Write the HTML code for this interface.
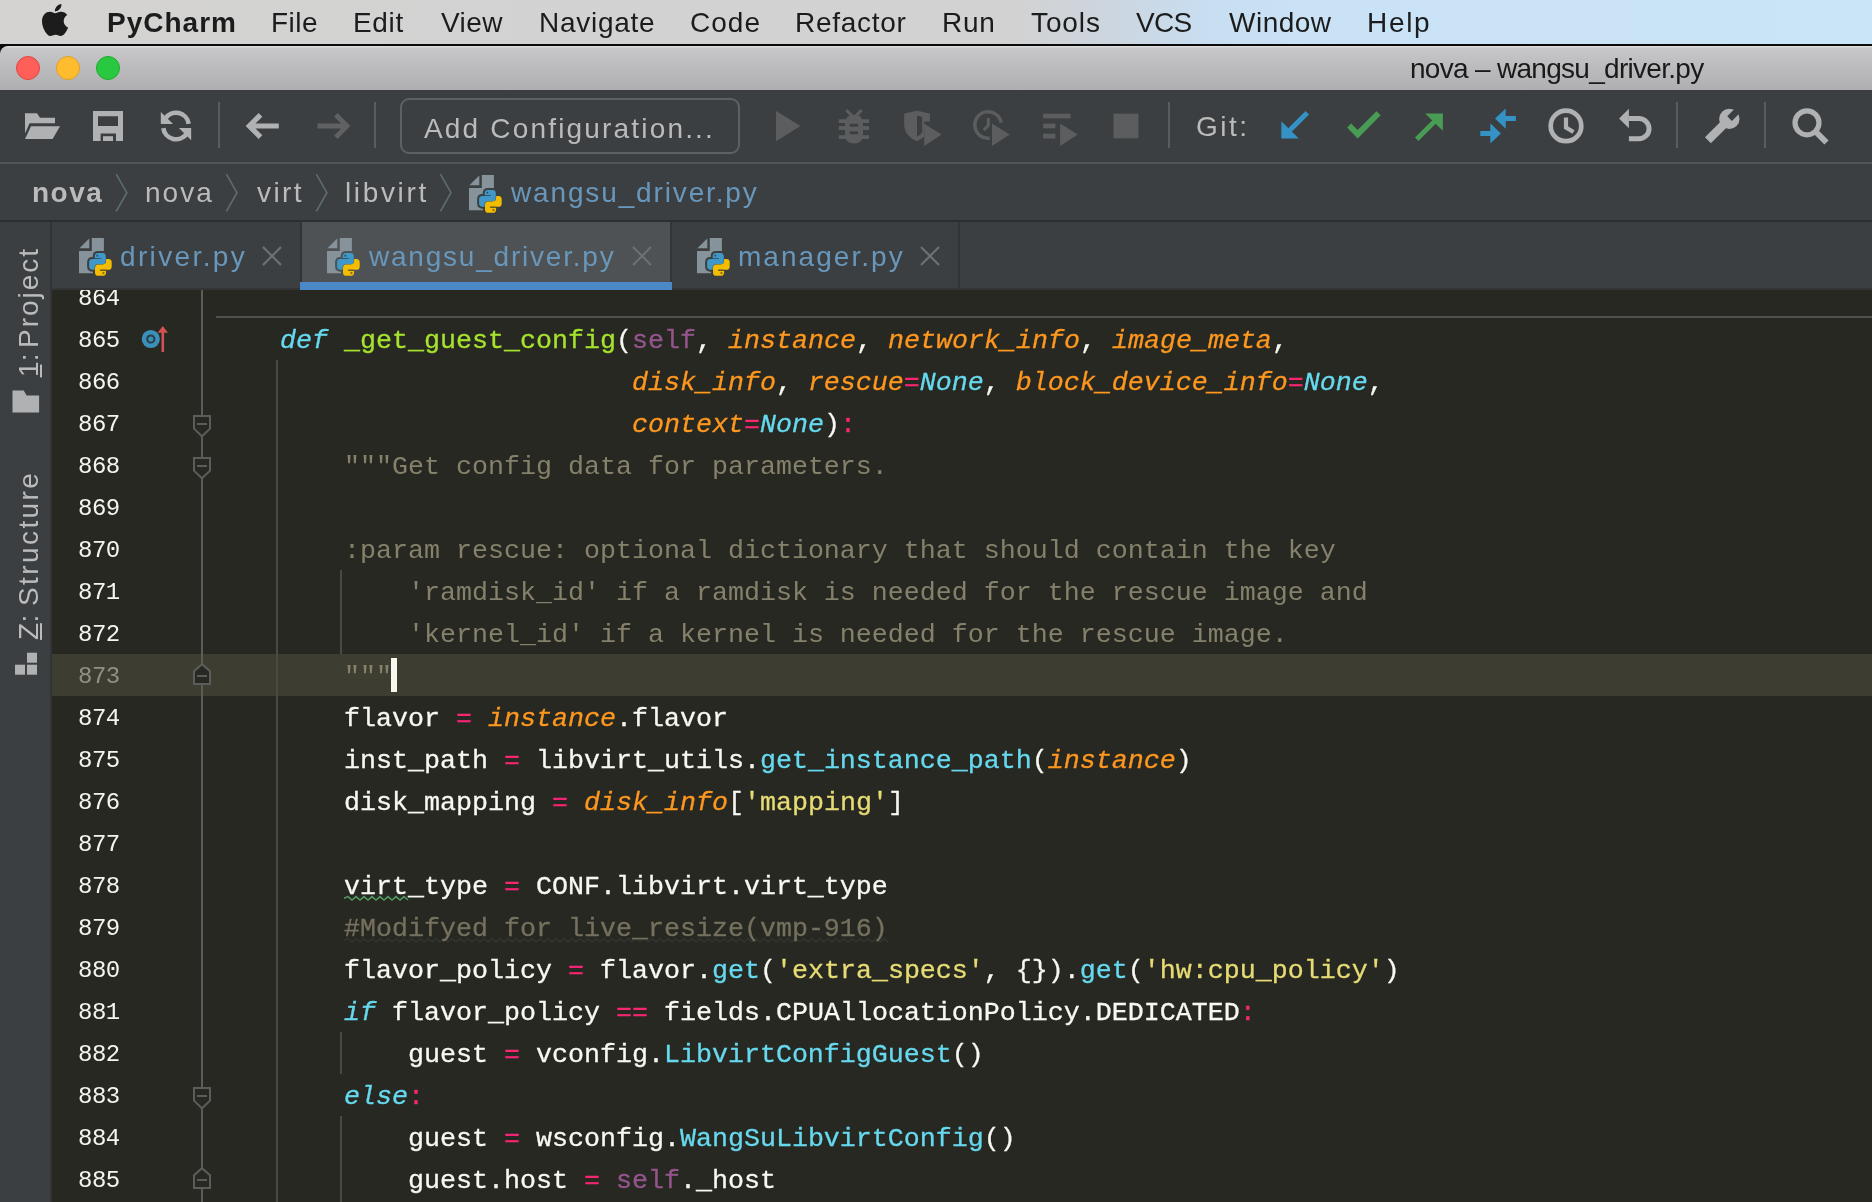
<!DOCTYPE html><html><head><meta charset="utf-8"><title>PyCharm</title><style>
*{margin:0;padding:0;box-sizing:border-box}
html,body{width:1872px;height:1202px;overflow:hidden;background:#272822}
body{position:relative;font-family:"Liberation Sans", sans-serif}
.ic{position:absolute;display:block;overflow:visible}
.abs{position:absolute}
.lb{will-change:transform;position:absolute;white-space:pre;line-height:40px;height:40px;font-family:"Liberation Sans", sans-serif}
#menubar{position:absolute;left:0;top:0;width:1872px;height:44px;background:linear-gradient(to right,#d4d3d2 0,#d2d2d2 1010px,#cdd5dd 1100px,#c8ddf0 1200px,#cae2f6 1300px,#cbe3f6 1500px,#c9e5f7 1872px)}
#menushade{display:none}
#menuline{position:absolute;left:0;top:44px;width:1872px;height:2px;background:#0a0a0a}
#titlebar{position:absolute;left:0;top:46px;width:1872px;height:44px;background:linear-gradient(to bottom,#dcdcdd 0,#dcdcdd 1px,#c7c7c9 2px,#bbbbbd 50%,#afafb1 100%);border-top-left-radius:8px}
#titleback{position:absolute;left:0;top:44px;width:20px;height:20px;background:#0a0a0a}
.tl{position:absolute;top:56px;width:24px;height:24px;border-radius:50%}
#toolbar{position:absolute;left:0;top:90px;width:1872px;height:72px;background:#3c3f41}
#tbline{position:absolute;left:0;top:162px;width:1872px;height:2px;background:#515355}
#navbar{position:absolute;left:0;top:164px;width:1872px;height:56px;background:#3c3f41}
#navline{position:absolute;left:0;top:220px;width:1872px;height:2px;background:#2c2e2f}
#tabs{position:absolute;left:0;top:222px;width:1872px;height:66px;background:#3c3f41}
#tabsline{position:absolute;left:52px;top:288px;width:1820px;height:2px;background:#323435}
#side{position:absolute;left:0;top:222px;width:50px;height:980px;background:#3c3f41}
#sideline{position:absolute;left:50px;top:222px;width:2px;height:980px;background:#323435}
#acttab{position:absolute;left:300px;top:222px;width:372px;height:60px;background:#4e5254;border-left:2px solid #323435;border-right:2px solid #323435}
#actline{position:absolute;left:300px;top:282px;width:372px;height:8px;background:#4a88c7}
#tab3r{position:absolute;left:958px;top:222px;width:2px;height:66px;background:#323435}
#editor{position:absolute;left:52px;top:290px;width:1820px;height:912px;background:#272822}
#curline{position:absolute;left:52px;top:654px;width:1820px;height:42px;background:#3e3d32}
.ln{will-change:transform;position:absolute;left:78.2px;width:60px;height:42px;line-height:42px;font-family:"Liberation Mono", monospace;font-size:24px;letter-spacing:-0.5px;color:#f5f5f0;white-space:pre;padding-top:2px}
.ln.cur{color:#90908a}
.cl{will-change:transform;position:absolute;left:216.2px;height:42px;line-height:42px;font-family:"Liberation Mono", monospace;font-size:26.67px;color:#f8f8f2;white-space:pre;padding-top:1.5px;-webkit-text-stroke:0.3px}
.k{color:#66d9ef;font-style:italic} .f{color:#a6e22e} .p{color:#fd971f;font-style:italic} .s{color:#94558d} .o{color:#f92672}
.d{color:#86816b;-webkit-text-stroke:0} .c{color:#75715e} .y{color:#e6db74} .b{color:#66d9ef}
.vl{will-change:transform;position:absolute;white-space:pre;font-family:"Liberation Sans", sans-serif;color:#bbbbbb;line-height:1;height:0;transform-origin:0 0;transform:rotate(-90deg)}
.vl>*{} 
.vl{}
.u{text-decoration:underline;text-decoration-thickness:2px;text-underline-offset:3px}
</style></head><body>
<div id="editor"></div><div id="curline"></div>
<svg class="ic" style="left:0;top:290px" width="1872" height="912" viewBox="0 290 1872 912">
<rect x="216" y="316" width="1656" height="2" fill="#505050"/>
<rect x="201" y="290" width="2" height="912" fill="#5c5c5a"/>
<rect x="276" y="360" width="2" height="842" fill="#494a45"/>
<rect x="340" y="570" width="2" height="84" fill="#494a45"/>
<rect x="340" y="1032" width="2" height="42" fill="#494a45"/>
<rect x="340" y="1116" width="2" height="86" fill="#494a45"/>
<path d="M194,416 H210 V428.6 L202,436.3 L194,428.6 Z" fill="#272822" stroke="#5c5c5a" stroke-width="2"/><path d="M197,424 H207" stroke="#5c5c5a" stroke-width="2"/>
<path d="M194,458 H210 V470.6 L202,478.3 L194,470.6 Z" fill="#272822" stroke="#5c5c5a" stroke-width="2"/><path d="M197,466 H207" stroke="#5c5c5a" stroke-width="2"/>
<path d="M194,1088 H210 V1100.6 L202,1108.3 L194,1100.6 Z" fill="#272822" stroke="#5c5c5a" stroke-width="2"/><path d="M197,1096 H207" stroke="#5c5c5a" stroke-width="2"/>
<path d="M194,684 H210 V671.2 L202,664.2 L194,671.2 Z" fill="#272822" stroke="#5c5c5a" stroke-width="2"/><path d="M197,676 H207" stroke="#5c5c5a" stroke-width="2"/>
<path d="M194,1188 H210 V1175.2 L202,1168.2 L194,1175.2 Z" fill="#272822" stroke="#5c5c5a" stroke-width="2"/><path d="M197,1180 H207" stroke="#5c5c5a" stroke-width="2"/>
<circle cx="150.8" cy="339" r="9.1" fill="#3a90b8"/><circle cx="150.8" cy="339" r="3.6" fill="none" stroke="#2b3b45" stroke-width="2"/>
<path d="M162.8,352 V331" stroke="#d25252" stroke-width="2.6" fill="none"/><path d="M157.6,332.8 L162.8,326 L168,332.8 Z" fill="#d25252"/>
<rect x="391" y="658" width="6" height="34" fill="#f8f8f0"/>
<path d="M344,898.3000000000001 L348,896.6 L352,900.0 L356,896.6 L360,900.0 L364,896.6 L368,900.0 L372,896.6 L376,900.0 L380,896.6 L384,900.0 L388,896.6 L392,900.0 L396,896.6 L400,900.0 L404,896.6 L408,900.0" fill="none" stroke="#4f9a5e" stroke-width="1.5"/>
<path d="M344,940.3000000000001 L348,938.6 L352,942.0 L356,938.6 L360,942.0 L364,938.6 L368,942.0 L372,938.6 L376,942.0 L380,938.6 L384,942.0 L388,938.6 L392,942.0 L396,938.6 L400,942.0 L404,938.6 L408,942.0 L412,938.6 L416,942.0 L420,938.6 L424,942.0 L428,938.6 L432,942.0 L436,938.6 L440,942.0 L444,938.6 L448,942.0 L452,938.6 L456,942.0 L460,938.6 L464,942.0 L468,938.6 L472,942.0 L476,938.6 L480,942.0 L484,938.6 L488,942.0 L492,938.6 L496,942.0 L500,938.6 L504,942.0 L508,938.6 L512,942.0 L516,938.6 L520,942.0 L524,938.6 L528,942.0 L532,938.6 L536,942.0 L540,938.6 L544,942.0 L548,938.6 L552,942.0 L556,938.6 L560,942.0 L564,938.6 L568,942.0 L572,938.6 L576,942.0 L580,938.6 L584,942.0 L588,938.6 L592,942.0 L596,938.6 L600,942.0 L604,938.6 L608,942.0 L612,938.6 L616,942.0 L620,938.6 L624,942.0 L628,938.6 L632,942.0 L636,938.6 L640,942.0 L644,938.6 L648,942.0 L652,938.6 L656,942.0 L660,938.6 L664,942.0 L668,938.6 L672,942.0 L676,938.6 L680,942.0 L684,938.6 L688,942.0 L692,938.6 L696,942.0 L700,938.6 L704,942.0 L708,938.6 L712,942.0 L716,938.6 L720,942.0 L724,938.6 L728,942.0 L732,938.6 L736,942.0 L740,938.6 L744,942.0 L748,938.6 L752,942.0 L756,938.6 L760,942.0 L764,938.6 L768,942.0 L772,938.6 L776,942.0 L780,938.6 L784,942.0 L788,938.6 L792,942.0 L796,938.6 L800,942.0 L804,938.6 L808,942.0 L812,938.6 L816,942.0 L820,938.6 L824,942.0 L828,938.6 L832,942.0 L836,938.6 L840,942.0 L844,938.6 L848,942.0 L852,938.6 L856,942.0 L860,938.6 L864,942.0 L868,938.6 L872,942.0 L876,938.6 L880,942.0 L884,938.6 L888,942.0" fill="none" stroke="#363732" stroke-width="1.3"/>
</svg>
<div class="ln" style="top:276px">864</div>
<div class="ln" style="top:318px">865</div>
<div class="cl" style="top:318px">    <span class="k">def</span> <span class="f">_get_guest_config</span>(<span class="s">self</span>, <span class="p">instance</span>, <span class="p">network_info</span>, <span class="p">image_meta</span>,</div>
<div class="ln" style="top:360px">866</div>
<div class="cl" style="top:360px">                          <span class="p">disk_info</span>, <span class="p">rescue</span><span class="o">=</span><span class="k">None</span>, <span class="p">block_device_info</span><span class="o">=</span><span class="k">None</span>,</div>
<div class="ln" style="top:402px">867</div>
<div class="cl" style="top:402px">                          <span class="p">context</span><span class="o">=</span><span class="k">None</span>)<span class="o">:</span></div>
<div class="ln" style="top:444px">868</div>
<div class="cl" style="top:444px">        <span class="d">&quot;&quot;&quot;Get config data for parameters.</span></div>
<div class="ln" style="top:486px">869</div>
<div class="ln" style="top:528px">870</div>
<div class="cl" style="top:528px">        <span class="d">:param rescue: optional dictionary that should contain the key</span></div>
<div class="ln" style="top:570px">871</div>
<div class="cl" style="top:570px">            <span class="d">&#x27;ramdisk_id&#x27; if a ramdisk is needed for the rescue image and</span></div>
<div class="ln" style="top:612px">872</div>
<div class="cl" style="top:612px">            <span class="d">&#x27;kernel_id&#x27; if a kernel is needed for the rescue image.</span></div>
<div class="ln cur" style="top:654px">873</div>
<div class="cl" style="top:654px">        <span class="d">&quot;&quot;&quot;</span></div>
<div class="ln" style="top:696px">874</div>
<div class="cl" style="top:696px">        flavor <span class="o">=</span> <span class="p">instance</span>.flavor</div>
<div class="ln" style="top:738px">875</div>
<div class="cl" style="top:738px">        inst_path <span class="o">=</span> libvirt_utils.<span class="b">get_instance_path</span>(<span class="p">instance</span>)</div>
<div class="ln" style="top:780px">876</div>
<div class="cl" style="top:780px">        disk_mapping <span class="o">=</span> <span class="p">disk_info</span>[<span class="y">&#x27;mapping&#x27;</span>]</div>
<div class="ln" style="top:822px">877</div>
<div class="ln" style="top:864px">878</div>
<div class="cl" style="top:864px">        virt_type <span class="o">=</span> CONF.libvirt.virt_type</div>
<div class="ln" style="top:906px">879</div>
<div class="cl" style="top:906px">        <span class="c">#Modifyed for live_resize(vmp-916)</span></div>
<div class="ln" style="top:948px">880</div>
<div class="cl" style="top:948px">        flavor_policy <span class="o">=</span> flavor.<span class="b">get</span>(<span class="y">&#x27;extra_specs&#x27;</span>, {}).<span class="b">get</span>(<span class="y">&#x27;hw:cpu_policy&#x27;</span>)</div>
<div class="ln" style="top:990px">881</div>
<div class="cl" style="top:990px">        <span class="k">if</span> flavor_policy <span class="o">==</span> fields.CPUAllocationPolicy.DEDICATED<span class="o">:</span></div>
<div class="ln" style="top:1032px">882</div>
<div class="cl" style="top:1032px">            guest <span class="o">=</span> vconfig.<span class="b">LibvirtConfigGuest</span>()</div>
<div class="ln" style="top:1074px">883</div>
<div class="cl" style="top:1074px">        <span class="k">else</span><span class="o">:</span></div>
<div class="ln" style="top:1116px">884</div>
<div class="cl" style="top:1116px">            guest <span class="o">=</span> wsconfig.<span class="b">WangSuLibvirtConfig</span>()</div>
<div class="ln" style="top:1158px">885</div>
<div class="cl" style="top:1158px">            guest.host <span class="o">=</span> <span class="s">self</span>._host</div>
<div id="menubar"></div><div id="menushade"></div><div id="menuline"></div><div id="titleback"></div><div id="titlebar"></div>
<div class="tl" style="left:16px;background:#fe5f58;border:1px solid #e2463f"></div>
<div class="tl" style="left:56px;background:#febc2e;border:1px solid #e0a028"></div>
<div class="tl" style="left:96px;background:#28c840;border:1px solid #1eab2d"></div>
<svg class="ic" style="left:42px;top:3.8px" width="26" height="32" viewBox="0 0 814 1000"><path fill="#1c1c1c" d="M788.1 340.9c-5.800 4.500-108.200 62.200-108.200 190.500 0 148.400 130.300 200.900 134.200 202.200-.6 3.200-20.700 71.900-68.700 141.900-42.800 61.600-87.500 123.100-155.500 123.100s-85.500-39.500-164-39.500c-76.500 0-103.700 40.800-165.900 40.800s-105.600-57-155.500-127C46.700 790.700 0 663 0 541.800c0-194.400 126.400-297.500 250.800-297.500 66.100 0 121.200 43.400 162.700 43.400 39.500 0 101.100-46 176.300-46 28.500 0 130.900 2.600 198.300 99.200zm-234-181.500c31.100-36.900 53.100-88.100 53.100-139.300 0-7.100-.6-14.300-1.900-20.100-50.600 1.900-110.800 33.700-147.100 75.800-28.500 32.400-55.100 83.600-55.100 135.500 0 7.800 1.300 15.600 1.900 18.100 3.200.6 8.400 1.300 13.600 1.300 45.400 0 102.500-30.400 135.500-71.300z"/></svg>
<div id="toolbar"></div><div id="tbline"></div><div id="navbar"></div><div id="navline"></div><div id="tabs"></div><div id="tabsline"></div>
<div id="side"></div><div id="sideline"></div><div id="acttab"></div><div id="actline"></div><div id="tab3r"></div>
<svg class="ic" style="left:0;top:90px" width="1872" height="74" viewBox="0 90 1872 74">
<path d="M25,113.3 H37 L40,117.7 H55 V123.3 H29.6 L25,133.6 Z" fill="#afb1b3"/>
<path d="M31,126.2 H60 L52.6,139 H25 Z" fill="#afb1b3"/>
<path fill-rule="evenodd" d="M93,111 H123 V141 H116 V133.6 H100.6 V141 H93 Z M98,116.3 H118 V126 H98 Z" fill="#afb1b3"/>
<rect x="103" y="136.2" width="10" height="4.8" fill="#afb1b3"/>
<path d="M188.7,123.9 A12.85,12.85 0 0 0 165.3,118.4" fill="none" stroke="#afb1b3" stroke-width="4.6"/>
<path d="M163.3,128.1 A12.85,12.85 0 0 0 186.7,133.6" fill="none" stroke="#afb1b3" stroke-width="4.6"/>
<path d="M160.8,111.9 V123.9 H173.1 Z" fill="#afb1b3"/>
<path d="M191.2,140.2 V128.1 H178.9 Z" fill="#afb1b3"/>
<rect x="218" y="102" width="2" height="46" fill="#5a5c5d"/>
<rect x="374" y="102" width="2" height="46" fill="#5a5c5d"/>
<rect x="1168" y="102" width="2" height="46" fill="#5a5c5d"/>
<rect x="1676" y="102" width="2" height="46" fill="#5a5c5d"/>
<rect x="1764" y="102" width="2" height="46" fill="#5a5c5d"/>
<path d="M278.8,126 H250 M260.5,114.8 L249.3,126 L260.5,137.2" fill="none" stroke="#afb1b3" stroke-width="5.2" stroke-linejoin="miter"/>
<path d="M317.5,126 H346.3 M335.8,114.8 L347,126 L335.8,137.2" fill="none" stroke="#5f6163" stroke-width="4.8" stroke-linejoin="miter"/>
<rect x="401" y="99" width="338" height="54" rx="8" ry="8" fill="none" stroke="#5e6163" stroke-width="2"/>
<path d="M776,111 V141.2 L800.6,126 Z" fill="#5b5d5e"/>
<path d="M845,124 Q845,114.8 854,114.8 Q863,114.8 863,124 V134.5 Q863,143.6 854,143.6 Q845,143.6 845,134.5 Z" fill="#5b5d5e"/>
<path d="M838.8,121.2 H869 M838.8,128 H869 M838.8,137.2 H869" stroke="#5b5d5e" stroke-width="3.8"/>
<path d="M846.3,110 L851.8,115.6 M861.7,110 L856.2,115.6" stroke="#5b5d5e" stroke-width="3.2"/>
<rect x="849.7" y="123.8" width="8.4" height="2.9" fill="#3c3f41"/><rect x="849.7" y="131.3" width="8.4" height="2.9" fill="#3c3f41"/>
<path fill-rule="evenodd" d="M904.2,113.5 L917,110.8 L929.9,113.5 V121.5 H924.2 V136.6 Q921,139.5 917,141.2 Q904.2,136 904.2,124 Z M917,115.5 V136.5 Q920.5,134.8 922.2,132.2 V117 Z" fill="#5b5d5e"/>
<path d="M924.2,123.8 V146 L941.6,134.5 Z" fill="#5b5d5e"/>
<path d="M1001.2,122.6 A13.3,13.3 0 1 0 989.7,138.2" fill="none" stroke="#5b5d5e" stroke-width="3.5"/>
<path d="M988.3,118 V125.5 L983.7,130.2" fill="none" stroke="#5b5d5e" stroke-width="3"/>
<path d="M992,123.6 V146 L1009.7,134.5 Z" fill="#5b5d5e"/>
<rect x="1043.1" y="113.7" width="27.5" height="4.7" fill="#5b5d5e"/><rect x="1043.1" y="123.6" width="12.3" height="4.7" fill="#5b5d5e"/><rect x="1043.1" y="133.7" width="12.3" height="4.8" fill="#5b5d5e"/>
<path d="M1060.1,123.6 V146 L1077.8,134.5 Z" fill="#5b5d5e"/>
<rect x="1113.5" y="113.7" width="24.9" height="24.6" fill="#5b5d5e"/>
<path d="M1281.3,138.6 V121.2 L1298.8,138.6 Z" fill="#3592c4"/><path d="M1288,132 L1307.3,112.8" stroke="#3592c4" stroke-width="5" fill="none"/>
<path d="M1347.1,127.6 L1351.2,123.6 L1357.6,130 L1376.5,111.2 L1380.7,115.3 L1357.6,138.6 Z" fill="#499c54"/>
<path d="M1425.1,113.4 H1442.9 V130.8 Z" fill="#499c54"/><path d="M1416.7,139.3 L1436,120" stroke="#499c54" stroke-width="4.8" fill="none"/>
<path d="M1495.1,118.5 L1505.7,108.4 V116 H1515.9 V121 H1505.7 V128.7 Z" fill="#3592c4"/>
<path d="M1500.9,133.5 L1490.3,123.3 V131.1 H1480.3 V136 H1490.3 V143.6 Z" fill="#3592c4"/>
<circle cx="1566" cy="125.9" r="15.3" fill="none" stroke="#afb1b3" stroke-width="4.7"/>
<path d="M1566,117.6 V127.5 L1573.5,132" fill="none" stroke="#afb1b3" stroke-width="4.2"/>
<path d="M1619.1,118.5 L1628.9,108.7 V128.2 Z" fill="#afb1b3"/>
<path d="M1628.9,118.5 H1638.9 A10.15,10.15 0 0 1 1638.9,138.8 H1628.9" fill="none" stroke="#afb1b3" stroke-width="5"/>
<path d="M1707.9,140.3 L1727,121.2" stroke="#afb1b3" stroke-width="8.4" fill="none"/>
<circle cx="1729.3" cy="118.9" r="10.2" fill="#afb1b3"/>
<path d="M1729.6,118.6 L1742,106.2" stroke="#3c3f41" stroke-width="6.6" fill="none"/>
<circle cx="1807" cy="122.8" r="12" fill="none" stroke="#afb1b3" stroke-width="5.2"/>
<path d="M1815.5,131.5 L1826.5,142.5" stroke="#afb1b3" stroke-width="6" fill="none"/>
</svg>
<svg class="ic" style="left:0;top:164px" width="800" height="58" viewBox="0 164 800 58">
<path d="M116.2,174.2 L126.8,192.7 L116.2,211.4" fill="none" stroke="#5c6b72" stroke-width="1.7"/>
<path d="M226.4,174.2 L237.0,192.7 L226.4,211.4" fill="none" stroke="#5c6b72" stroke-width="1.7"/>
<path d="M316.3,174.2 L326.90000000000003,192.7 L316.3,211.4" fill="none" stroke="#5c6b72" stroke-width="1.7"/>
<path d="M440.4,174.2 L451.0,192.7 L440.4,211.4" fill="none" stroke="#5c6b72" stroke-width="1.7"/>
</svg>
<svg class="ic" style="left:0;top:222px" width="52" height="980" viewBox="0 222 52 980">
<path d="M12.5,390.6 H23.7 L26.6,395.6 H39.1 V412.5 H12.5 Z" fill="#afb1b3"/>
<rect x="27" y="652.7" width="10" height="10" fill="#afb1b3"/><rect x="15" y="664.7" width="10" height="10" fill="#afb1b3"/><rect x="27" y="664.7" width="10" height="10" fill="#afb1b3"/>
<rect x="40" y="364.6" width="2" height="12.8" fill="#bbbbbb"/><rect x="40" y="623.2" width="2" height="16.7" fill="#bbbbbb"/>
</svg>
<svg class="ic" style="left:466.9px;top:172.5px" width="40" height="44" viewBox="-2 -2 40 44"><path d="M12.8,0 H24.9 V35.3 H0 V13.1 H12.8 Z" fill="#87939a"/><path d="M0.4,10.3 H10.3 V0.5 Z" fill="#87939a"/><g transform="translate(10.1,14.9)"><path d="M5.6,3.4 Q5.6,0 9,0 H13.3 Q16.7,0 16.7,3.4 V8 Q16.7,11.4 13.3,11.4 H8.9 Q5.6,11.4 5.6,14.7 V16.8 H3.4 Q0,16.8 0,13.4 V9.4 Q0,6 3.4,6 H11.4 V5.2 H5.6 Z" fill="#3c3f41" stroke="#3c3f41" stroke-width="4" stroke-linejoin="round"/><path d="M17,19.5 Q17,22.9 13.6,22.9 H9.3 Q5.9,22.9 5.9,19.5 V14.9 Q5.9,11.5 9.3,11.5 H13.7 Q17,11.5 17,8.2 V6.1 H19.2 Q22.6,6.1 22.6,9.5 V13.5 Q22.6,16.9 19.2,16.9 H11.2 V17.7 H17 Z" fill="#3c3f41" stroke="#3c3f41" stroke-width="4" stroke-linejoin="round"/><path d="M5.6,3.4 Q5.6,0 9,0 H13.3 Q16.7,0 16.7,3.4 V8 Q16.7,11.4 13.3,11.4 H8.9 Q5.6,11.4 5.6,14.7 V16.8 H3.4 Q0,16.8 0,13.4 V9.4 Q0,6 3.4,6 H11.4 V5.2 H5.6 Z" fill="#3f98c8"/><path d="M17,19.5 Q17,22.9 13.6,22.9 H9.3 Q5.9,22.9 5.9,19.5 V14.9 Q5.9,11.5 9.3,11.5 H13.7 Q17,11.5 17,8.2 V6.1 H19.2 Q22.6,6.1 22.6,9.5 V13.5 Q22.6,16.9 19.2,16.9 H11.2 V17.7 H17 Z" fill="#f2bd00"/><rect x="7.4" y="1.9" width="1.7" height="1.7" fill="#2d4a5a"/><rect x="13.5" y="19.3" width="1.7" height="1.7" fill="#6b5a1a"/><rect x="5.6" y="5.1" width="5.9" height="1" fill="#34566b"/><rect x="11.1" y="16.8" width="5.9" height="1" fill="#5b4f22"/></g></svg>
<svg class="ic" style="left:77.3px;top:236.3px" width="40" height="44" viewBox="-2 -2 40 44"><path d="M12.8,0 H24.9 V35.3 H0 V13.1 H12.8 Z" fill="#87939a"/><path d="M0.4,10.3 H10.3 V0.5 Z" fill="#87939a"/><g transform="translate(10.1,14.9)"><path d="M5.6,3.4 Q5.6,0 9,0 H13.3 Q16.7,0 16.7,3.4 V8 Q16.7,11.4 13.3,11.4 H8.9 Q5.6,11.4 5.6,14.7 V16.8 H3.4 Q0,16.8 0,13.4 V9.4 Q0,6 3.4,6 H11.4 V5.2 H5.6 Z" fill="#3c3f41" stroke="#3c3f41" stroke-width="4" stroke-linejoin="round"/><path d="M17,19.5 Q17,22.9 13.6,22.9 H9.3 Q5.9,22.9 5.9,19.5 V14.9 Q5.9,11.5 9.3,11.5 H13.7 Q17,11.5 17,8.2 V6.1 H19.2 Q22.6,6.1 22.6,9.5 V13.5 Q22.6,16.9 19.2,16.9 H11.2 V17.7 H17 Z" fill="#3c3f41" stroke="#3c3f41" stroke-width="4" stroke-linejoin="round"/><path d="M5.6,3.4 Q5.6,0 9,0 H13.3 Q16.7,0 16.7,3.4 V8 Q16.7,11.4 13.3,11.4 H8.9 Q5.6,11.4 5.6,14.7 V16.8 H3.4 Q0,16.8 0,13.4 V9.4 Q0,6 3.4,6 H11.4 V5.2 H5.6 Z" fill="#3f98c8"/><path d="M17,19.5 Q17,22.9 13.6,22.9 H9.3 Q5.9,22.9 5.9,19.5 V14.9 Q5.9,11.5 9.3,11.5 H13.7 Q17,11.5 17,8.2 V6.1 H19.2 Q22.6,6.1 22.6,9.5 V13.5 Q22.6,16.9 19.2,16.9 H11.2 V17.7 H17 Z" fill="#f2bd00"/><rect x="7.4" y="1.9" width="1.7" height="1.7" fill="#2d4a5a"/><rect x="13.5" y="19.3" width="1.7" height="1.7" fill="#6b5a1a"/><rect x="5.6" y="5.1" width="5.9" height="1" fill="#34566b"/><rect x="11.1" y="16.8" width="5.9" height="1" fill="#5b4f22"/></g></svg>
<svg class="ic" style="left:325.3px;top:236.3px" width="40" height="44" viewBox="-2 -2 40 44"><path d="M12.8,0 H24.9 V35.3 H0 V13.1 H12.8 Z" fill="#87939a"/><path d="M0.4,10.3 H10.3 V0.5 Z" fill="#87939a"/><g transform="translate(10.1,14.9)"><path d="M5.6,3.4 Q5.6,0 9,0 H13.3 Q16.7,0 16.7,3.4 V8 Q16.7,11.4 13.3,11.4 H8.9 Q5.6,11.4 5.6,14.7 V16.8 H3.4 Q0,16.8 0,13.4 V9.4 Q0,6 3.4,6 H11.4 V5.2 H5.6 Z" fill="#4e5254" stroke="#4e5254" stroke-width="4" stroke-linejoin="round"/><path d="M17,19.5 Q17,22.9 13.6,22.9 H9.3 Q5.9,22.9 5.9,19.5 V14.9 Q5.9,11.5 9.3,11.5 H13.7 Q17,11.5 17,8.2 V6.1 H19.2 Q22.6,6.1 22.6,9.5 V13.5 Q22.6,16.9 19.2,16.9 H11.2 V17.7 H17 Z" fill="#4e5254" stroke="#4e5254" stroke-width="4" stroke-linejoin="round"/><path d="M5.6,3.4 Q5.6,0 9,0 H13.3 Q16.7,0 16.7,3.4 V8 Q16.7,11.4 13.3,11.4 H8.9 Q5.6,11.4 5.6,14.7 V16.8 H3.4 Q0,16.8 0,13.4 V9.4 Q0,6 3.4,6 H11.4 V5.2 H5.6 Z" fill="#3f98c8"/><path d="M17,19.5 Q17,22.9 13.6,22.9 H9.3 Q5.9,22.9 5.9,19.5 V14.9 Q5.9,11.5 9.3,11.5 H13.7 Q17,11.5 17,8.2 V6.1 H19.2 Q22.6,6.1 22.6,9.5 V13.5 Q22.6,16.9 19.2,16.9 H11.2 V17.7 H17 Z" fill="#f2bd00"/><rect x="7.4" y="1.9" width="1.7" height="1.7" fill="#2d4a5a"/><rect x="13.5" y="19.3" width="1.7" height="1.7" fill="#6b5a1a"/><rect x="5.6" y="5.1" width="5.9" height="1" fill="#34566b"/><rect x="11.1" y="16.8" width="5.9" height="1" fill="#5b4f22"/></g></svg>
<svg class="ic" style="left:695.3px;top:236.3px" width="40" height="44" viewBox="-2 -2 40 44"><path d="M12.8,0 H24.9 V35.3 H0 V13.1 H12.8 Z" fill="#87939a"/><path d="M0.4,10.3 H10.3 V0.5 Z" fill="#87939a"/><g transform="translate(10.1,14.9)"><path d="M5.6,3.4 Q5.6,0 9,0 H13.3 Q16.7,0 16.7,3.4 V8 Q16.7,11.4 13.3,11.4 H8.9 Q5.6,11.4 5.6,14.7 V16.8 H3.4 Q0,16.8 0,13.4 V9.4 Q0,6 3.4,6 H11.4 V5.2 H5.6 Z" fill="#3c3f41" stroke="#3c3f41" stroke-width="4" stroke-linejoin="round"/><path d="M17,19.5 Q17,22.9 13.6,22.9 H9.3 Q5.9,22.9 5.9,19.5 V14.9 Q5.9,11.5 9.3,11.5 H13.7 Q17,11.5 17,8.2 V6.1 H19.2 Q22.6,6.1 22.6,9.5 V13.5 Q22.6,16.9 19.2,16.9 H11.2 V17.7 H17 Z" fill="#3c3f41" stroke="#3c3f41" stroke-width="4" stroke-linejoin="round"/><path d="M5.6,3.4 Q5.6,0 9,0 H13.3 Q16.7,0 16.7,3.4 V8 Q16.7,11.4 13.3,11.4 H8.9 Q5.6,11.4 5.6,14.7 V16.8 H3.4 Q0,16.8 0,13.4 V9.4 Q0,6 3.4,6 H11.4 V5.2 H5.6 Z" fill="#3f98c8"/><path d="M17,19.5 Q17,22.9 13.6,22.9 H9.3 Q5.9,22.9 5.9,19.5 V14.9 Q5.9,11.5 9.3,11.5 H13.7 Q17,11.5 17,8.2 V6.1 H19.2 Q22.6,6.1 22.6,9.5 V13.5 Q22.6,16.9 19.2,16.9 H11.2 V17.7 H17 Z" fill="#f2bd00"/><rect x="7.4" y="1.9" width="1.7" height="1.7" fill="#2d4a5a"/><rect x="13.5" y="19.3" width="1.7" height="1.7" fill="#6b5a1a"/><rect x="5.6" y="5.1" width="5.9" height="1" fill="#34566b"/><rect x="11.1" y="16.8" width="5.9" height="1" fill="#5b4f22"/></g></svg>
<svg class="ic" style="left:261px;top:245px" width="22" height="22" viewBox="261 245 22 22"><path d="M263,247 L281,265 M281,247 L263,265" stroke="#6e7072" stroke-width="2.2" fill="none"/></svg>
<svg class="ic" style="left:631px;top:245px" width="22" height="22" viewBox="631 245 22 22"><path d="M633,247 L651,265 M651,247 L633,265" stroke="#6e7072" stroke-width="2.2" fill="none"/></svg>
<svg class="ic" style="left:919px;top:245px" width="22" height="22" viewBox="919 245 22 22"><path d="M921,247 L939,265 M939,247 L921,265" stroke="#6e7072" stroke-width="2.2" fill="none"/></svg>
<div class="lb" style="left:107.00px;top:3.20px;font-size:28px;font-weight:bold;color:#1c1c1c;letter-spacing:1.001px">PyCharm</div>
<div class="lb" style="left:271.25px;top:3.20px;font-size:28px;font-weight:normal;color:#1c1c1c;letter-spacing:0.505px">File</div>
<div class="lb" style="left:353.25px;top:3.20px;font-size:28px;font-weight:normal;color:#1c1c1c;letter-spacing:0.650px">Edit</div>
<div class="lb" style="left:440.60px;top:3.20px;font-size:28px;font-weight:normal;color:#1c1c1c;letter-spacing:0.450px">View</div>
<div class="lb" style="left:538.75px;top:3.20px;font-size:28px;font-weight:normal;color:#1c1c1c;letter-spacing:0.729px">Navigate</div>
<div class="lb" style="left:690.11px;top:3.20px;font-size:28px;font-weight:normal;color:#1c1c1c;letter-spacing:1.036px">Code</div>
<div class="lb" style="left:794.75px;top:3.20px;font-size:28px;font-weight:normal;color:#1c1c1c;letter-spacing:0.723px">Refactor</div>
<div class="lb" style="left:941.75px;top:3.20px;font-size:28px;font-weight:normal;color:#1c1c1c;letter-spacing:0.733px">Run</div>
<div class="lb" style="left:1031.01px;top:3.20px;font-size:28px;font-weight:normal;color:#1c1c1c;letter-spacing:0.897px">Tools</div>
<div class="lb" style="left:1136.11px;top:3.20px;font-size:28px;font-weight:normal;color:#1c1c1c;letter-spacing:-0.675px">VCS</div>
<div class="lb" style="left:1229.34px;top:3.20px;font-size:28px;font-weight:normal;color:#1c1c1c;letter-spacing:0.499px">Window</div>
<div class="lb" style="left:1366.75px;top:3.20px;font-size:28px;font-weight:normal;color:#1c1c1c;letter-spacing:1.673px">Help</div>
<div class="lb" style="left:1410.20px;top:49.00px;font-size:28px;font-weight:normal;color:#1a1a1a;letter-spacing:-0.705px">nova – wangsu_driver.py</div>
<div class="lb" style="left:424.49px;top:109.30px;font-size:28px;font-weight:normal;color:#bbbbbb;letter-spacing:2.175px">Add Configuration...</div>
<div class="lb" style="left:1196.36px;top:107.30px;font-size:28px;font-weight:normal;color:#bbbbbb;letter-spacing:2.464px">Git:</div>
<div class="lb" style="left:31.50px;top:173.20px;font-size:28px;font-weight:bold;color:#bbbbbb;letter-spacing:1.468px">nova</div>
<div class="lb" style="left:144.50px;top:173.20px;font-size:28px;font-weight:normal;color:#bbbbbb;letter-spacing:2.043px">nova</div>
<div class="lb" style="left:256.98px;top:173.20px;font-size:28px;font-weight:normal;color:#bbbbbb;letter-spacing:2.436px">virt</div>
<div class="lb" style="left:344.50px;top:173.20px;font-size:28px;font-weight:normal;color:#bbbbbb;letter-spacing:2.639px">libvirt</div>
<div class="lb" style="left:510.65px;top:173.20px;font-size:28px;font-weight:normal;color:#6897bb;letter-spacing:1.857px">wangsu_driver.py</div>
<div class="lb" style="left:120.23px;top:236.60px;font-size:28px;font-weight:normal;color:#6897bb;letter-spacing:2.363px">driver.py</div>
<div class="lb" style="left:369.14px;top:236.60px;font-size:28px;font-weight:normal;color:#6897bb;letter-spacing:1.782px">wangsu_driver.py</div>
<div class="lb" style="left:737.50px;top:236.60px;font-size:28px;font-weight:normal;color:#6897bb;letter-spacing:2.046px">manager.py</div>
<div class="vl" style="left:14.7px;top:377.30px;font-size:28px;letter-spacing:0.300px">1:</div>
<div class="vl" style="left:14.7px;top:347.60px;font-size:28px;letter-spacing:1.989px">Project</div>
<div class="vl" style="left:14.7px;top:639.80px;font-size:28px;letter-spacing:0.300px">Z:</div>
<div class="vl" style="left:14.7px;top:605.90px;font-size:28px;letter-spacing:2.409px">Structure</div>
</body></html>
